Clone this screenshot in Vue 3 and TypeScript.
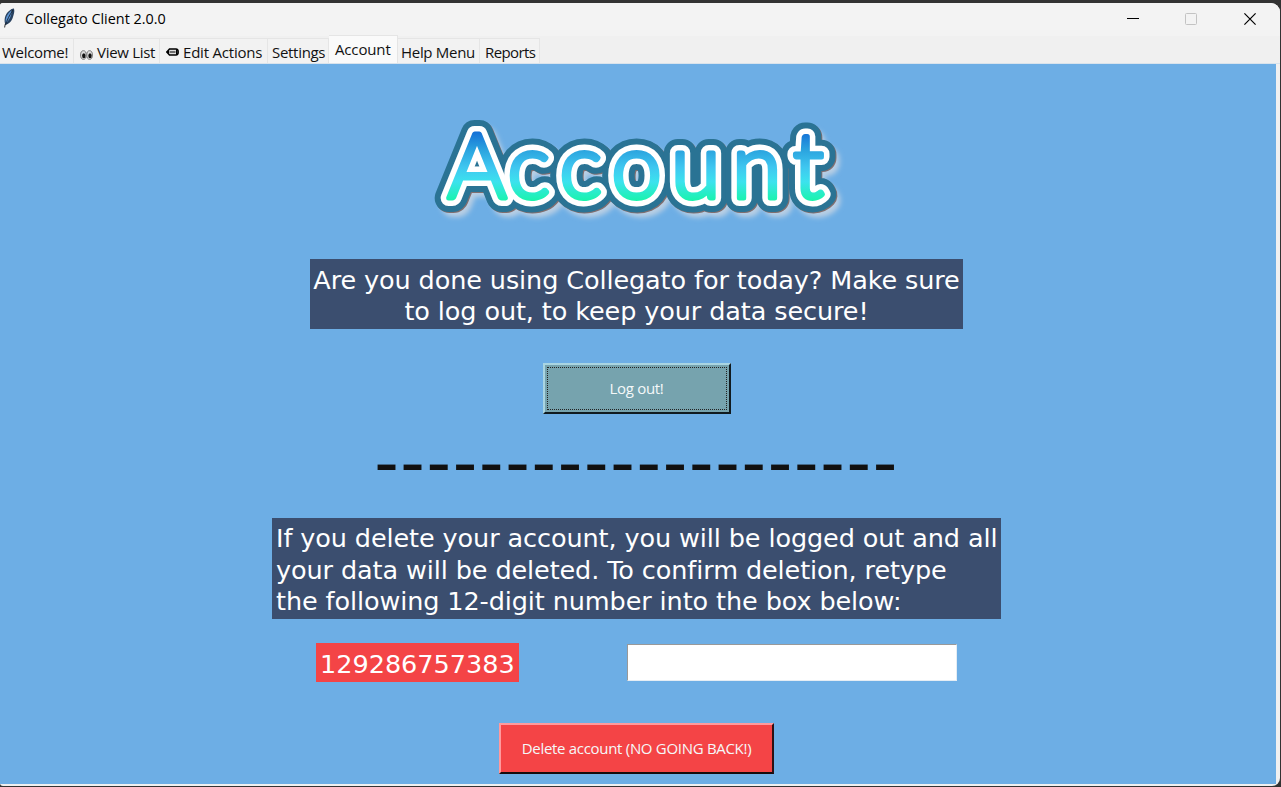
<script setup lang="ts">
import { ref } from 'vue'

interface Tab {
  id: string
  label: string
  icon?: 'eyes' | 'pencil'
}

const tabs: Tab[] = [
  { id: 'welcome', label: 'Welcome!' },
  { id: 'view', label: 'View List', icon: 'eyes' },
  { id: 'edit', label: 'Edit Actions', icon: 'pencil' },
  { id: 'settings', label: 'Settings' },
  { id: 'account', label: 'Account' },
  { id: 'help', label: 'Help Menu' },
  { id: 'reports', label: 'Reports' },
]

const activeTab = ref('account')
const confirmCode = '129286757383'
const typedCode = ref('')

// Start of each letter of the wordmark
const letterX = '20.5 80.5 132.5 184.5 244 305 366'
</script>

<template>
  <div class="desktop">
    <div class="window">
      <header class="titlebar">
        <svg class="feather" width="14" height="22" viewBox="0 0 14 22">
          <path d="M2.500 20.500 C3 17 4.500 14 6 11" fill="none" stroke="#555" stroke-width="1.200" />
          <path d="M3.500 18 C1.500 13 3 7 7 4 C9 2 11 1.300 12 1.500 C13 5 11.500 8 11 10 C9.500 15 6.500 17 3.500 18Z" fill="#28415f" />
          <path d="M4 16 C2.600 11 6 6 9.500 3.500 C10 8 7 14 4 16Z" fill="#5b93d2" />
          <path d="M3.500 18 C5 13 7.500 8 11 3" fill="none" stroke="#17212e" stroke-width=".9" />
        </svg>
        <span class="title">Collegato Client 2.0.0</span>
        <div class="controls">
          <svg width="12" height="12" viewBox="0 0 12 12"><path d="M0 5.500H12" stroke="#000" /></svg>
          <svg width="12" height="12" viewBox="0 0 12 12"><rect x=".5" y=".5" width="11" height="11" rx="1" fill="none" stroke="#c3c3c3" /></svg>
          <svg class="close" width="12" height="12" viewBox="0 0 12 12"><path d="M.4 .4 11.600 11.600M11.600 .4 .4 11.600" stroke="#000" stroke-width="1.200" /></svg>
        </div>
      </header>

      <nav class="tabs">
        <button
          v-for="tab in tabs"
          :key="tab.id"
          :class="['tab', tab.id, { active: tab.id === activeTab }]"
          @click="activeTab = tab.id"
        >
          <svg v-if="tab.icon === 'eyes'" class="eyes" width="13" height="10" viewBox="0 0 13 10">
            <ellipse cx="3.400" cy="5" rx="2.800" ry="4.300" fill="#ddd" stroke="#777" />
            <ellipse cx="9.600" cy="5" rx="2.800" ry="4.300" fill="#ddd" stroke="#777" />
            <ellipse cx="3.800" cy="5.800" rx="1.700" ry="2.500" fill="#111" />
            <ellipse cx="10" cy="5.800" rx="1.700" ry="2.500" fill="#111" />
          </svg>
          <svg v-if="tab.icon === 'pencil'" class="pencil" width="13" height="8" viewBox="0 0 13 8">
            <path d="M.8 4 3.500 1H10Q12.200 1 12.200 4T10 7H3.500Z" fill="#ddd" stroke="#000" stroke-width="1.500" />
            <path d="M3.500 4H9.500" stroke="#000" stroke-width="1.200" />
            <path d="M.5 4 3 2V6ZM10 1.500h1.500v5H10z" fill="#000" />
          </svg>
          <span>{{ tab.label }}</span>
        </button>
      </nav>

      <main class="page">
        <svg class="wordmark" width="420" height="120" viewBox="0 0 420 120" role="img" aria-label="Account">
          <defs>
            <linearGradient id="letters" gradientUnits="userSpaceOnUse" x1="0" y1="23" x2="0" y2="95">
              <stop offset="0" stop-color="#126bd5" />
              <stop offset=".28" stop-color="#2ba4df" />
              <stop offset=".52" stop-color="#3fc7f0" />
              <stop offset=".72" stop-color="#3ce2ee" />
              <stop offset="1" stop-color="#17f5a8" />
            </linearGradient>
            <filter id="glow" x="-10%" y="-20%" width="125%" height="150%">
              <feGaussianBlur stdDeviation="2.500" />
            </filter>
            <text id="word" class="word" :x="letterX" y="91">Account</text>
          </defs>
          <use href="#word" class="glow" x="5" y="6" filter="url(#glow)" />
          <use href="#word" class="shade" x="1" y="1" />
          <use href="#word" class="rim" />
          <use href="#word" class="halo" />
          <use href="#word" class="face" />
        </svg>

        <p class="note centered">Are you done using Collegato for today? Make sure<br>to log out, to keep your data secure!</p>
        <button class="btn logout"><span>Log out!</span></button>
        <div class="rule">--------------------</div>
        <p class="note warning">If you delete your account, you will be logged out and all<br>your data will be deleted. To confirm deletion, retype<br>the following 12-digit number into the box below:</p>
        <div class="confirm">
          <span class="code">{{ confirmCode }}</span>
          <input v-model="typedCode" class="entry" type="text" aria-label="Confirmation number">
        </div>
        <button class="btn delete"><span>Delete account (NO GOING BACK!)</span></button>
      </main>
    </div>
  </div>
</template>

<style>
html, body { margin: 0; overflow: hidden; }
</style>

<style scoped>
* { box-sizing: border-box; }
.desktop {
  width: 1281px;
  height: 787px;
  padding: 3px 1px 1px 0;
  background: #333;
  overflow: hidden;
}
.window {
  height: 783px;
  background: #f0f0f0;
  border-radius: 3px 9px 8px 3px;
  overflow: hidden;
}
.titlebar {
  display: flex;
  height: 33px;
  background: #f3f3f3;
  font: 14.400px/32px "Open Sans", "Noto Sans", sans-serif;
  color: #000;
}
.feather { margin: 4px 9px 0 2px; flex: none; }
.title { white-space: nowrap; }
.controls { display: flex; gap: 46px; margin: 10px 24px 0 auto; }
.close { margin-left: 1px; }
.tabs {
  display: flex;
  align-items: flex-end;
  height: 28px;
  border-bottom: 1px solid #d9e3ec;
}
.tab {
  display: flex;
  align-items: center;
  flex: none;
  height: 25px;
  padding: 1px 0 0 4px;
  border: 1px solid #e5e5e5;
  border-width: 1px 1px 0 0;
  background: #f2f2f2;
  color: #111;
  font: 15px/22px "Open Sans", "Noto Sans", sans-serif;
  letter-spacing: -0.3px;
  white-space: nowrap;
}
.tab.active { height: 28px; padding: 0 0 1px 7px; background: #fafafa; }
.welcome { width: 74px; padding-left: 2px; }
.view { width: 86px; padding-left: 6px; }
.edit { width: 108px; padding-left: 6px; letter-spacing: -0.2px; }
.settings { width: 61px; }
.tab.account { width: 69px; padding-left: 6px; letter-spacing: -0.15px; }
.help { width: 82px; padding-left: 3px; }
.reports { width: 60px; padding-left: 5px; letter-spacing: -0.6px; }
.eyes { margin: 7px 4px 0 0; }
.pencil { margin-right: 4px; }
.page {
  display: flex;
  flex-direction: column;
  align-items: center;
  width: 1276px;
  height: 720px;
  padding: 43px 3px 0 0;
  background: #6daee5;
}
.wordmark { flex: none; overflow: visible; }
.word {
  font: 300 90px Lato, sans-serif;
  stroke-linejoin: round;
  stroke-linecap: round;
}
.glow { fill: #b9cfe4; stroke: #b9cfe4; stroke-width: 26px; }
.shade { fill: #806f70; stroke: #806f70; stroke-width: 28px; }
.rim { fill: #2a7394; stroke: #2a7394; stroke-width: 28px; }
.halo { fill: #fff; stroke: #fff; stroke-width: 16px; }
.face { fill: url(#letters); stroke: url(#letters); stroke-width: 5px; }
.note {
  flex: none;
  margin: 0;
  padding: 5px 0 0 4px;
  background: #3b4e6f;
  color: #fff;
  font: 25.500px/31px "DejaVu Sans", Verdana, sans-serif;
  letter-spacing: -0.1px;
  white-space: nowrap;
}
.centered { width: 653px; height: 70px; margin-top: 32px; padding: 6px 0 0; text-align: center; }
.warning { width: 729px; height: 101px; line-height: 31.500px; }
.btn {
  flex: none;
  padding: 0;
  border: 2px solid;
  color: #f4f8f9;
  font: 15px/20px "Open Sans", "Noto Sans", sans-serif;
  letter-spacing: -0.3px;
}
.btn span { padding-bottom: 2px; }
.logout {
  width: 188px;
  height: 51px;
  margin-top: 34px;
  padding: 2px;
  background: #76a3ae;
  border-color: #a9d5e2 #101b20 #101b20 #a9d5e2;
}
.logout span { display: grid; place-items: center; height: 43px; border: 1px dotted #222; }
.delete span { display: block; }
.rule {
  flex: none;
  height: 104px;
  color: #111;
  font: 68px/97px "DejaVu Sans", Verdana, sans-serif;
  letter-spacing: 1.700px;
  white-space: nowrap;
}
.confirm { display: flex; align-items: flex-start; gap: 108px; width: 641px; margin-top: 24px; }
.code {
  width: 203px;
  height: 39px;
  padding: 6px 0 0 4px;
  background: #f44446;
  color: #fff;
  font: 25.500px/31px "DejaVu Sans", Verdana, sans-serif;
}
.entry {
  width: 330px;
  height: 37px;
  margin-top: 1px;
  padding: 4px;
  border: 1px solid;
  border-color: #999 #e5edf4 #e5edf4 #999;
  background: #fff;
  font: 25px "DejaVu Sans", sans-serif;
  outline: none;
}
.delete {
  width: 275px;
  height: 51px;
  margin-top: 41px;
  background: #f44446;
  border-color: #ff9a9d #2c1115 #170b0d #ff9a9d;
}
</style>
